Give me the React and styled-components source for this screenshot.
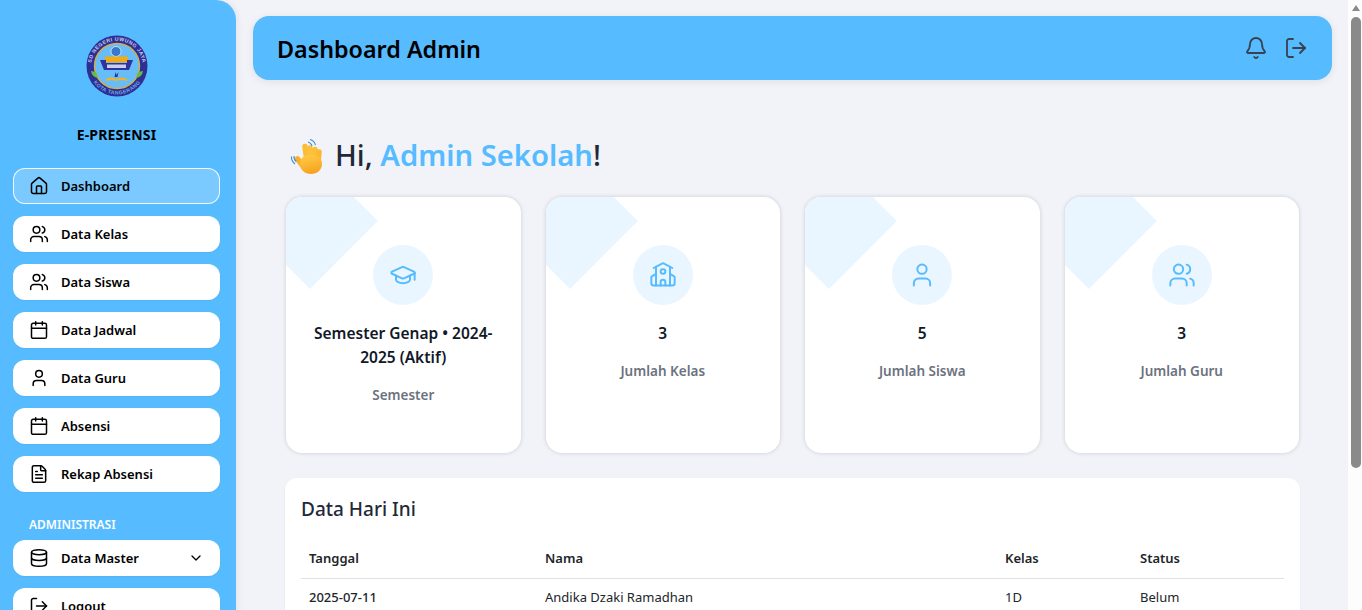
import React from "react";
import styled, { createGlobalStyle } from "styled-components";
import {
  Bell,
  Calendar,
  ChevronDown,
  Database,
  FileText,
  GraduationCap,
  House,
  LogOut,
  School,
  User,
  Users,
} from "lucide-react";

const GlobalStyle = createGlobalStyle`
  html, body {
    margin: 0;
    padding: 0;
    height: 100%;
    overflow: hidden;
    background: #f1f3f8;
    font-family: "Noto Sans", "Open Sans", sans-serif;
  }
`;

const Page = styled.div`
  display: flex;
  height: 610px;
  overflow: hidden;
`;

const Sidebar = styled.aside`
  width: 236px;
  flex: none;
  height: 660px;
  padding: 0 16px 0 13px;
  box-sizing: border-box;
  background: #56bbff;
  border-radius: 0 20px 20px 0;
  box-shadow: 2px 0 6px rgba(0, 0, 0, 0.06);
`;

const LogoWrap = styled.div`
  display: flex;
  justify-content: center;
  box-sizing: border-box;
  padding-top: 35px;
  height: 124px;
`;

const Brand = styled.div`
  margin-top: 1px;
  height: 39px;
  text-align: center;
  font-size: 14px;
  line-height: 19px;
  font-weight: 700;
  letter-spacing: 0.15px;
  color: #000;
`;

const Nav = styled.nav`
  display: flex;
  flex-direction: column;
  gap: 12px;
  margin-top: 4px;
`;

const NavItem = styled.a`
  display: flex;
  align-items: center;
  height: 36px;
  padding: 0 16px;
  gap: 12px;
  border-radius: 12px;
  font-size: 13px;
  font-weight: 600;
  color: #000;
  background: ${(p) => (p.$active ? "rgba(255,255,255,0.22)" : "#fff")};
  box-shadow: ${(p) => (p.$active ? "inset 0 0 0 1px rgba(255,255,255,0.9)" : "0 1px 2px rgba(0,0,0,0.04)")};

  svg {
    flex: none;
  }
`;

const NavLabel = styled.span`
  flex: 1;
`;

const SectionLabel = styled.div`
  margin: 13px 0 -5px 16px;
  font-size: 12px;
  line-height: 16px;
  font-weight: 600;
  color: #fff;
`;

const Main = styled.main`
  flex: 1;
  min-width: 0;
  padding: 16px 16px 0 17px;
`;

const Header = styled.header`
  display: flex;
  align-items: center;
  justify-content: space-between;
  height: 64px;
  padding: 0 24px;
  box-sizing: border-box;
  background: #56bbff;
  border-radius: 16px;
  box-shadow: 0 2px 8px rgba(0, 0, 0, 0.08);
`;

const HeaderTitle = styled.h1`
  margin: 0;
  padding-top: 2px;
  font-size: 23.3px;
  font-weight: 600;
  color: #000;
`;

const HeaderIcons = styled.div`
  display: flex;
  gap: 16px;
  color: #374151;
`;

const Content = styled.div`
  padding: 53px 33px 0;
`;

const Greeting = styled.h2`
  display: flex;
  align-items: center;
  margin: 0 0 20px -1px;
  height: 44px;
  font-size: 29.2px;
  font-weight: 500;
  color: #1f2937;
  gap: 5px;
`;

const Highlight = styled.span`
  color: #56bbff;
  font-weight: 600;
`;

const Cards = styled.div`
  display: grid;
  grid-template-columns: repeat(4, 1fr);
  gap: 25px;
`;

const Card = styled.div`
  position: relative;
  height: 256px;
  padding-top: 48px;
  box-sizing: border-box;
  overflow: hidden;
  background: #fff;
  border-radius: 16px;
  box-shadow: 0 0 4px rgba(0, 0, 0, 0.16);
  display: flex;
  flex-direction: column;
  align-items: center;
  text-align: center;

  &::before {
    content: "";
    position: absolute;
    left: -24px;
    top: -24px;
    width: 96px;
    height: 96px;
    background: #eaf6ff;
    transform: rotate(45deg);
  }
`;

const IconCircle = styled.div`
  position: relative;
  width: 60px;
  height: 60px;
  border-radius: 50%;
  background: #eaf6ff;
  color: #56bbff;
  display: flex;
  align-items: center;
  justify-content: center;
`;

const CardValue = styled.div`
  position: relative;
  margin-top: 16px;
  padding: 0 20px;
  font-size: 15.5px;
  line-height: 24px;
  font-weight: 600;
  color: #111827;
`;

const CardLabel = styled.div`
  position: relative;
  margin-top: 16px;
  font-size: 13.5px;
  line-height: 20px;
  font-weight: 600;
  color: #6b7280;
`;

const TableCard = styled.section`
  margin: 25px -1px 0;
  padding: 16px;
  box-sizing: border-box;
  background: #fff;
  border-radius: 12px;
  box-shadow: 0 1px 3px rgba(0, 0, 0, 0.05);
`;

const TableTitle = styled.h3`
  margin: 0 0 15px;
  font-size: 19px;
  line-height: 30px;
  font-weight: 500;
  color: #1f2937;
`;

const Table = styled.table`
  width: 100%;
  border-collapse: collapse;
  table-layout: fixed;
  font-size: 13px;
  color: #212529;
`;

const Th = styled.th`
  box-sizing: border-box;
  width: ${(p) => p.$w};
  padding: 10px 8px;
  line-height: 19px;
  text-align: left;
  font-weight: 600;
  border-bottom: 1px solid #dee2e6;
`;

const Td = styled.td`
  padding: 9px 8px;
  line-height: 19px;
  font-weight: ${(p) => (p.$strong ? 500 : 400)};
`;

const ScrollTrack = styled.div`
  flex: none;
  width: 14px;
  height: 610px;
  background: #fdfdfd;
  display: flex;
  flex-direction: column;
  align-items: center;
  padding: 5px 0 0 2px;
  box-sizing: border-box;
`;

const ScrollUp = styled.div`
  width: 0;
  height: 0;
  border-left: 4.5px solid transparent;
  border-right: 4.5px solid transparent;
  border-bottom: 6px solid #8a8a8a;
`;

const ScrollThumb = styled.div`
  width: 10px;
  height: 451px;
  margin-top: 6px;
  border-radius: 5px;
  background: #8a8a8a;
`;

const LogoText = styled.text`
  font-family: "Liberation Sans", sans-serif;
  font-size: 5.2px;
  font-weight: 700;
  letter-spacing: 0.45px;
`;

const Logo = () => (
  <svg width="62" height="62" viewBox="0 0 62 62">
    <defs>
      <path id="logoTop" d="M6 39a26 26 0 1 1 50 0" />
      <path id="logoBottom" d="M8 47.800a28.500 28.500 0 0 0 46 0" />
    </defs>
    <circle cx="31" cy="31" r="30.500" fill="#2d2f94" />
    <circle cx="31" cy="31" r="22.500" fill="#66bdf8" stroke="#d8ae4a" strokeWidth="1.400" />
    <LogoText fill="#c6c9ee">
      <textPath href="#logoTop" startOffset="50%" textAnchor="middle">
        SD NEGERI UWUNG JAYA
      </textPath>
    </LogoText>
    <LogoText fill="#6fa8e8">
      <textPath href="#logoBottom" startOffset="50%" textAnchor="middle">
        KOTA TANGERANG
      </textPath>
    </LogoText>
    <circle cx="30" cy="16.500" r="5" fill="#3a78c9" stroke="#dfeeff" strokeWidth="0.800" />
    <rect x="19" y="21.500" width="23" height="6" fill="#f0ac17" />
    <path d="M14 25h6v3h21v-3h6l-4 10H18z" fill="#2f33a0" />
    <rect x="21" y="29.500" width="19" height="3.500" fill="#c9cdee" />
    <path d="M20 44q5-3 10.500 0q5-3 10.500 0v2q-5-2-10.500 0q-5-2-10.500 0z" fill="#f0b429" />
    <path d="M28.500 42l1-5 1 3 2-3-1 5z" fill="#2f33a0" />
    <path d="M5 36l5 1 2 6q-6-1-7-7zM57 36l-5 1-2 6q6-1 7-7z" fill="#68bb45" />
  </svg>
);

const WaveHand = () => (
  <svg width="45" height="40" viewBox="0 0 45 40">
    <defs>
      <linearGradient id="handFill" x1="0.300" y1="0" x2="0.600" y2="1">
        <stop offset="0" stopColor="#ffcb45" />
        <stop offset="1" stopColor="#f7a01c" />
      </linearGradient>
    </defs>
    <g fill="none" strokeLinecap="round" strokeWidth="5.500">
      <path d="M22 26L20 11.500" stroke="#fcbc36" />
      <path d="M26 25L25 13" stroke="#fdc23c" />
      <path d="M30 26L30 14.500" stroke="#fdbf38" />
      <path d="M33 28L34 17" stroke="#fcb832" />
      <path d="M18 31L12.500 24" stroke="#fbb02c" />
    </g>
    <path d="M15 29c0-6 4-9 10-9s12 2 12 9c0 6-5 10-11 10s-11-4-11-10z" fill="url(#handFill)" />
    <path d="M23 7c2 .6 3.500 2 4 4M25 4.500c2.800.8 4.700 2.800 5.500 5.500" stroke="#3f8fd6" strokeWidth="1.100" fill="none" />
    <path d="M9 21c-.2 2 .5 4 2.300 5.500M6.500 21.500c-.2 3 1 5.500 3.500 7.500" stroke="#3f8fd6" strokeWidth="1.100" fill="none" />
  </svg>
);

const menu = [
  { label: "Dashboard", icon: House, active: true },
  { label: "Data Kelas", icon: Users },
  { label: "Data Siswa", icon: Users },
  { label: "Data Jadwal", icon: Calendar },
  { label: "Data Guru", icon: User },
  { label: "Absensi", icon: Calendar },
  { label: "Rekap Absensi", icon: FileText },
];

const stats = [
  { value: "Semester Genap • 2024-2025 (Aktif)", label: "Semester", icon: GraduationCap },
  { value: "3", label: "Jumlah Kelas", icon: School },
  { value: "5", label: "Jumlah Siswa", icon: User },
  { value: "3", label: "Jumlah Guru", icon: Users },
];

export default function App() {
  return (
    <>
      <GlobalStyle />
      <Page>
        <Sidebar>
          <LogoWrap>
            <Logo />
          </LogoWrap>
          <Brand>E-PRESENSI</Brand>
          <Nav>
            {menu.map((item) => (
              <NavItem key={item.label} $active={item.active}>
                <item.icon size={20} strokeWidth={1.8} />
                <NavLabel>{item.label}</NavLabel>
              </NavItem>
            ))}
            <SectionLabel>ADMINISTRASI</SectionLabel>
            <NavItem>
              <Database size={20} strokeWidth={1.8} />
              <NavLabel>Data Master</NavLabel>
              <ChevronDown size={16} strokeWidth={2} />
            </NavItem>
            <NavItem>
              <LogOut size={20} strokeWidth={1.8} />
              <NavLabel>Logout</NavLabel>
            </NavItem>
          </Nav>
        </Sidebar>
        <Main>
          <Header>
            <HeaderTitle>Dashboard Admin</HeaderTitle>
            <HeaderIcons>
              <Bell size={24} strokeWidth={1.8} />
              <LogOut size={24} strokeWidth={1.8} />
            </HeaderIcons>
          </Header>
          <Content>
            <Greeting>
              <WaveHand />
              <span>
                Hi, <Highlight>Admin Sekolah</Highlight>!
              </span>
            </Greeting>
            <Cards>
              {stats.map((s) => (
                <Card key={s.label}>
                  <IconCircle>
                    <s.icon size={28} strokeWidth={1.7} />
                  </IconCircle>
                  <CardValue>{s.value}</CardValue>
                  <CardLabel>{s.label}</CardLabel>
                </Card>
              ))}
            </Cards>
            <TableCard>
              <TableTitle>Data Hari Ini</TableTitle>
              <Table>
                <thead>
                  <tr>
                    <Th $w="236px">Tanggal</Th>
                    <Th $w="460px">Nama</Th>
                    <Th $w="135px">Kelas</Th>
                    <Th>Status</Th>
                  </tr>
                </thead>
                <tbody>
                  <tr>
                    <Td $strong>2025-07-11</Td>
                    <Td>Andika Dzaki Ramadhan</Td>
                    <Td>1D</Td>
                    <Td>Belum</Td>
                  </tr>
                </tbody>
              </Table>
            </TableCard>
          </Content>
        </Main>
        <ScrollTrack>
          <ScrollUp />
          <ScrollThumb />
        </ScrollTrack>
      </Page>
    </>
  );
}
